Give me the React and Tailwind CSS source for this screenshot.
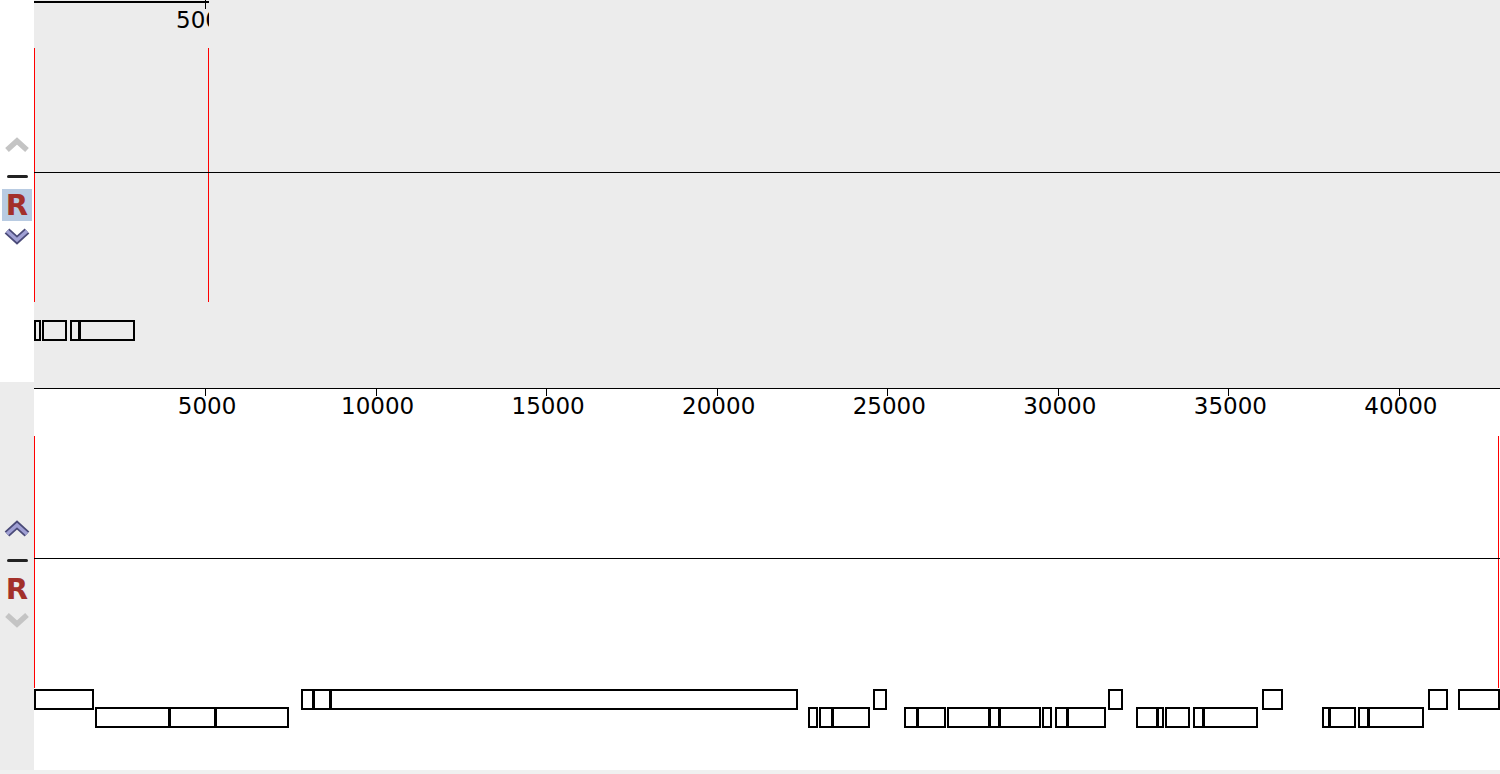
const ORIGIN = 34.5;
const SCALE = 1364.4 / 40000;

// feature boxes: [x1, x2] in page pixels
const topBoxes = [
    [34, 41],
    [42, 67],
    [70, 80],
    [79, 135],
];

const rowOne = [
    [34, 94],
    [301, 314],
    [313, 331],
    [330, 798],
    [873, 887],
    [1108, 1123],
    [1262, 1283],
    [1428, 1448],
    [1458, 1500],
];

const rowTwo = [
    [95, 170],
    [169, 216],
    [215, 289],
    [808, 818],
    [819, 833],
    [832, 870],
    [904, 918],
    [917, 946],
    [947, 990],
    [989, 1000],
    [999, 1041],
    [1042, 1052],
    [1055, 1068],
    [1067, 1106],
    [1136, 1158],
    [1157, 1164],
    [1165, 1190],
    [1193, 1204],
    [1203, 1258],
    [1322, 1330],
    [1329, 1356],
    [1358, 1369],
    [1368, 1424],
];

const ticks = [5000, 10000, 15000, 20000, 25000, 30000, 35000, 40000];

function Chevron({ blue, points }) {
    return (
        <svg width="28" height="18" viewBox="0 0 28 18">
            {blue ? (
                <>
                    <polyline points={points} fill="none" stroke="#4a4a78" strokeWidth="7" strokeLinejoin="miter" />
                    <polyline points={points} fill="none" stroke="#a0a0d4" strokeWidth="3.5" strokeLinejoin="miter" />
                </>
            ) : (
                <polyline points={points} fill="none" stroke="#c4c4c4" strokeWidth="5.5" strokeLinejoin="miter" />
            )}
        </svg>
    );
}

function TrackControls({ upBlue, highlight }) {
    return (
        <div className="flex flex-col items-center">
            <Chevron blue={upBlue} points="4,14 14,5 24,14" />
            <div className="mt-[21px] h-[3px] w-[21px] rounded-sm bg-[#222]"></div>
            <div
                className={
                    highlight
                        ? "mt-[11px] flex h-[32px] w-[30px] items-center justify-center bg-[#b8cbe2]"
                        : "mt-[11px] flex h-[32px] w-[30px] items-center justify-center"
                }
            >
                <span className="font-['DejaVu_Sans',sans-serif] text-[29px] font-bold leading-none text-[#a3302a]">R</span>
            </div>
            <div className="mt-[6px]">
                <Chevron blue={!upBlue} points="4,4 14,13 24,4" />
            </div>
        </div>
    );
}

function Box({ x1, x2, top }) {
    return (
        <div
            className="absolute h-[21px] border-2 border-black"
            style={{ left: x1 - 34, width: x2 - x1, top }}
        ></div>
    );
}

export default function App() {
    return (
        <div className="flex h-[774px] w-[1500px] flex-col overflow-hidden bg-[#f0f0f0] font-['DejaVu_Sans',sans-serif]">

            {/* Zoomed track */}
            <div className="flex h-[388px]">
                <div className="flex w-[34px] flex-col bg-[#ececec]">
                    <div className="h-[382px] bg-white pt-[136px]">
                        <TrackControls upBlue={false} highlight />
                    </div>
                </div>
                <div className="relative flex-1 bg-[#ececec]">
                    {/* ruler, clipped to the visible range */}
                    <div className="absolute left-0 top-0 h-[40px] w-[175px] overflow-hidden">
                        <div className="absolute left-0 top-[1px] h-[2px] w-full bg-black"></div>
                        <div className="absolute left-[171px] top-0 h-[9px] w-px bg-black"></div>
                        <span className="absolute left-[142px] top-[9px] text-[23px] leading-none text-black">5000</span>
                    </div>

                    <div className="absolute left-0 top-[48px] h-[254px] w-px bg-[#ff0000]"></div>
                    <div className="absolute left-[174px] top-[48px] h-[254px] w-px bg-[#ff0000]"></div>
                    <div className="absolute left-0 top-[172px] h-px w-full bg-black"></div>

                    {topBoxes.map(([a, b]) => (
                        <Box key={a} x1={a} x2={b} top={320} />
                    ))}
                </div>
            </div>

            {/* Overview track */}
            <div className="flex h-[382px]">
                <div className="w-[34px] bg-[#ececec] pt-[132px]">
                    <TrackControls upBlue highlight={false} />
                </div>
                <div className="relative flex-1 bg-white">
                    <div className="absolute left-0 top-0 h-px w-full bg-black"></div>

                    {ticks.map((t) => {
                        const x = ORIGIN + t * SCALE - 34;
                        return (
                            <div key={t}>
                                <div className="absolute top-0 h-[8px] w-px bg-black" style={{ left: Math.round(x) }}></div>
                                <span
                                    className="absolute top-[7px] -translate-x-1/2 text-[23px] leading-none text-black"
                                    style={{ left: x + 2 }}
                                >
                                    {t}
                                </span>
                            </div>
                        );
                    })}

                    <div className="absolute left-0 top-[48px] h-[252px] w-px bg-[#ff0000]"></div>
                    <div className="absolute left-[1464px] top-[48px] h-[252px] w-px bg-[#ff0000]"></div>
                    <div className="absolute left-0 top-[170px] h-px w-full bg-black"></div>

                    {rowOne.map(([a, b]) => (
                        <Box key={a} x1={a} x2={b} top={301} />
                    ))}
                    {rowTwo.map(([a, b]) => (
                        <Box key={a} x1={a} x2={b} top={319} />
                    ))}
                </div>
            </div>
        </div>
    );
}
